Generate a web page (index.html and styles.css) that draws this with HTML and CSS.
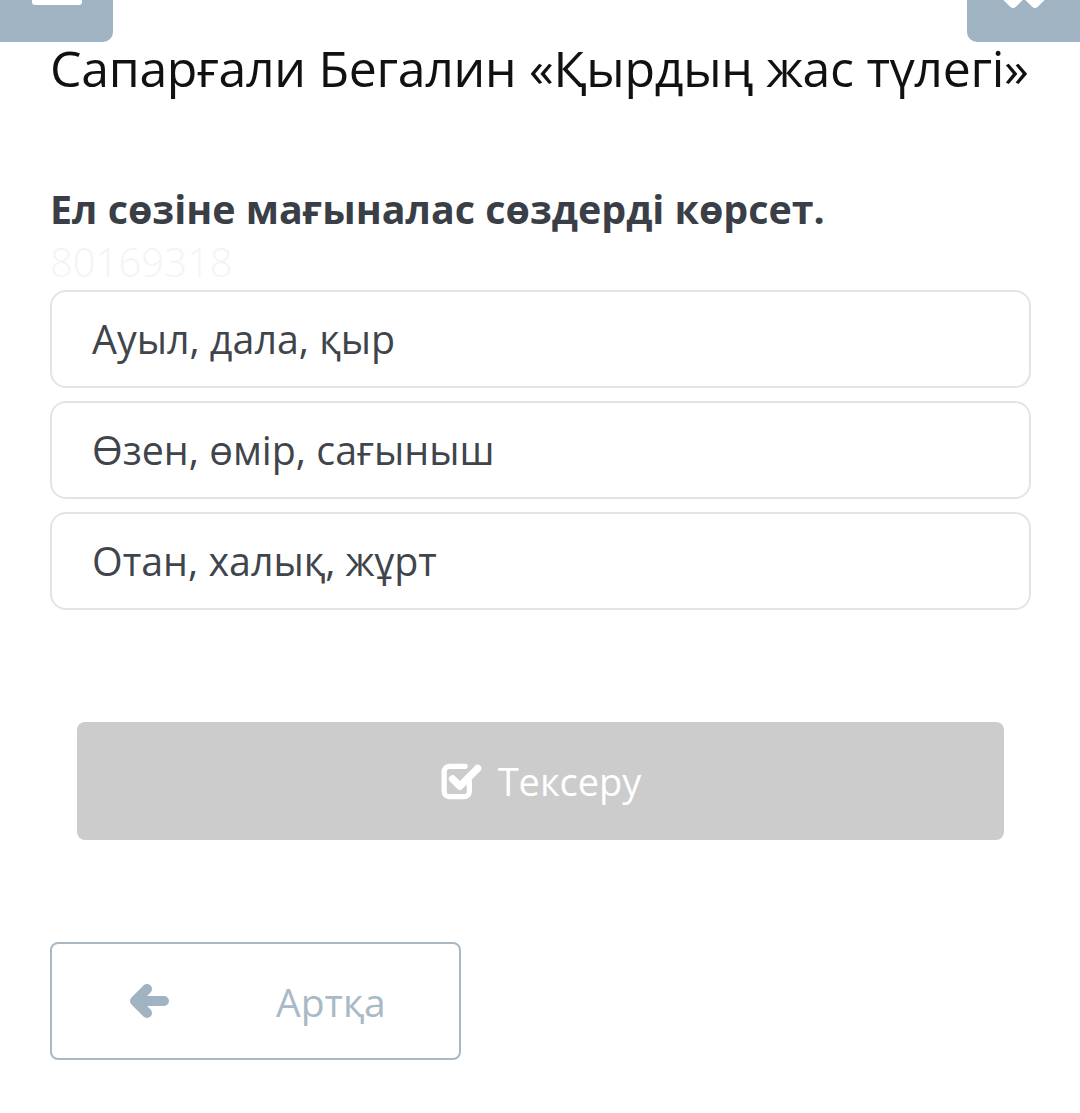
FILE: index.html
```html
<!DOCTYPE html>
<html lang="kk">
<head>
  <meta charset="UTF-8">
  <title>Қырдың жас түлегі</title>
  <link rel="stylesheet" href="styles.css">
</head>
<body>
  <!-- top tabs, cut off by the screen edge -->
  <div class="topbar">
    <div class="tab tab-left"><span class="bar"></span></div>
    <div class="tab tab-right">
      <svg class="close" width="50" height="10" viewBox="0 0 50 10">
        <path d="M4 -6 L14 4 L24 -6 M26 -6 L36 4 L46 -6" stroke="#fff" stroke-width="8" fill="none" stroke-linecap="round" stroke-linejoin="round"/>
      </svg>
    </div>
  </div>

  <div class="quiz">
    <h1 class="title">Сапарғали Бегалин «Қырдың жас түлегі»</h1>

    <p class="question">Ел сөзіне мағыналас сөздерді көрсет.</p>
    <div class="qid">80169318</div>

    <div class="options">
      <div class="option">Ауыл, дала, қыр</div>
      <div class="option">Өзен, өмір, сағыныш</div>
      <div class="option">Отан, халық, жұрт</div>
    </div>

    <button class="check-btn" disabled>
      <svg class="check-icon" width="44" height="42" viewBox="0 0 42 40">
        <path d="M28 20 V30 a5 5 0 0 1 -5 5 H9 a5 5 0 0 1 -5 -5 V11 a5 5 0 0 1 5 -5 H24" stroke="#fff" stroke-width="5" fill="none" stroke-linecap="round"/>
        <path d="M12 18 L19 25 L36 8" stroke="#fff" stroke-width="7" fill="none" stroke-linecap="round" stroke-linejoin="round"/>
      </svg>
      Тексеру
    </button>

    <button class="back-btn">
      <svg class="arrow" width="42" height="36" viewBox="0 0 42 36">
        <path d="M36 18 H8 M19 6 L7 18 L19 30" stroke="#9fb3c2" stroke-width="10" fill="none" stroke-linecap="round" stroke-linejoin="round"/>
      </svg>
      <span class="back-label">Артқа</span>
    </button>
  </div>
</body>
</html>
```

FILE: styles.css
```css
body {
  margin: 0;
  background-color: #fff;
  font-family: 'Open Sans', 'Noto Sans', sans-serif;
  color: #3d4148;
}

/* top tabs */
.topbar {
  display: flex;
  justify-content: space-between;
  height: 42px;
}

.tab {
  width: 113px;
  height: 42px;
  background-color: #9fb3c2;
  display: flex;
  justify-content: center;
}

.tab-left {
  border-bottom-right-radius: 10px;
}

.tab-right {
  border-bottom-left-radius: 10px;
}

.bar {
  display: block;
  width: 50px;
  height: 5px;
  background-color: #fff;
  border-bottom-left-radius: 3px;
  border-bottom-right-radius: 3px;
}

.close {
  display: block;
}

/* quiz body */
.quiz {
  padding: 0 49px 0 50px;
}

.title {
  margin: 0;
  font-size: 50px;
  font-weight: 400;
  letter-spacing: -0.3px;
  line-height: 52px;
  white-space: nowrap;
  color: #111;
}

.question {
  margin: 93px 0 0;
  font-size: 39.4px;
  font-weight: 700;
  line-height: 44px;
  color: #3a3f47;
}

.qid {
  margin-top: 8px;
  font-size: 40px;
  font-weight: 300;
  line-height: 46px;
  color: #f4f4f4;
}

.options {
  display: flex;
  flex-direction: column;
  gap: 13px;
  margin-top: 5px;
}

.option {
  height: 94px;
  display: flex;
  align-items: center;
  padding-left: 40px;
  border: 2px solid #e4e4e4;
  border-radius: 16px;
  font-size: 39.4px;
  color: #40444b;
}

.check-btn {
  display: flex;
  align-items: center;
  justify-content: center;
  gap: 14px;
  width: 927px;
  height: 118px;
  margin: 112px 0 0 27px;
  background-color: #cccccc;
  border: none;
  border-radius: 8px;
  font-family: inherit;
  font-size: 38px;
  color: #fff;
}

.back-btn {
  display: flex;
  align-items: center;
  width: 411px;
  height: 118px;
  margin-top: 102px;
  padding: 0 0 0 76px;
  background-color: #fff;
  border: 2px solid #a9b8c3;
  border-radius: 8px;
  font-family: inherit;
  font-size: 39px;
  color: #a9b9c5;
}

.back-label {
  margin-left: 106px;
}
```
